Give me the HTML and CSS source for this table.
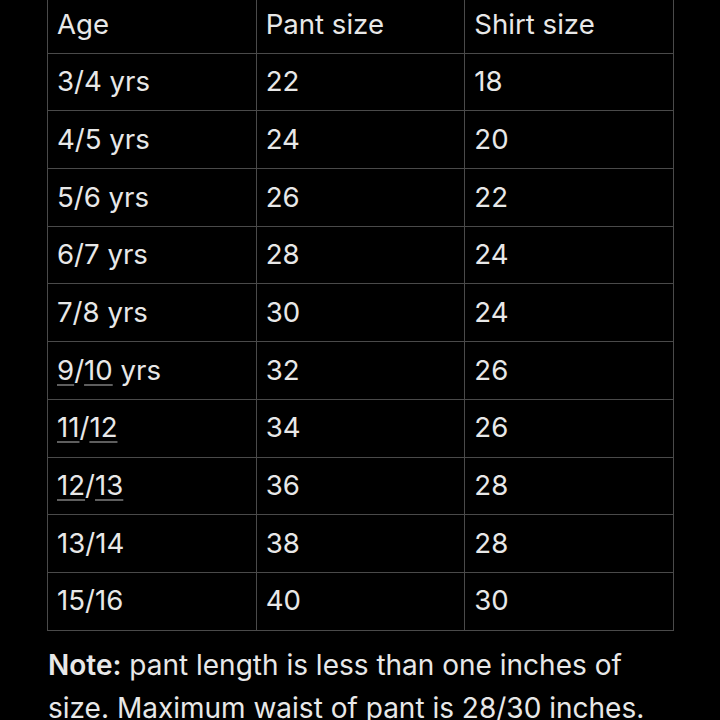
FILE: index.html
```html
<!DOCTYPE html>
<html lang="en">
<head>
<meta charset="utf-8">
<title>Size chart</title>
<link rel="stylesheet" href="styles.css">
</head>
<body>
<main class="page">
  <table class="sizes">
    <tr class="head"><td>Age</td><td>Pant size</td><td>Shirt size</td></tr>
    <tr><td>3/4 yrs</td><td>22</td><td>18</td></tr>
    <tr><td>4/5 yrs</td><td>24</td><td>20</td></tr>
    <tr><td>5/6 yrs</td><td>26</td><td>22</td></tr>
    <tr><td>6/7 yrs</td><td>28</td><td>24</td></tr>
    <tr><td>7/8 yrs</td><td>30</td><td>24</td></tr>
    <tr><td><span class="link">9</span>/<span class="link">10</span> yrs</td><td>32</td><td>26</td></tr>
    <tr><td><span class="link">11</span>/<span class="link">12</span></td><td>34</td><td>26</td></tr>
    <tr><td><span class="link">12</span>/<span class="link">13</span></td><td>36</td><td>28</td></tr>
    <tr><td>13/14</td><td>38</td><td>28</td></tr>
    <tr><td>15/16</td><td>40</td><td>30</td></tr>
  </table>
  <p class="note"><strong>Note:</strong> pant length is less than one inches of size. Maximum waist of pant is 28/30 inches.</p>
</main>
</body>
</html>
```
FILE: styles.css
```css
html, body {
  margin: 0;
  padding: 0;
  background: #000;
}
body {
  font-family: Inter, "Open Sans", "Liberation Sans", sans-serif;
  color: #e8e8e8;
  overflow: hidden;
}
.page {
  padding-left: 47px;
  width: 627px;
  margin-top: -5px;
}
.sizes {
  border-collapse: collapse;
  width: 627px;
  table-layout: fixed;
  font-size: 27.6px;
}
.sizes td {
  border: 1px solid #4a4a4a;
  height: 56.7px;
  padding: 0 0 0 9px;
  vertical-align: middle;
  line-height: 1;
}
.link {
  text-decoration: underline solid #5e5e5e;
  text-decoration-thickness: 2px;
  text-underline-offset: 4px;
  text-decoration-skip-ink: none;
}
.note {
  margin: 13px 0 0 1px;
  font-size: 28px;
  line-height: 43px;
  width: 640px;
}
.note strong {
  font-weight: 600;
}
```
